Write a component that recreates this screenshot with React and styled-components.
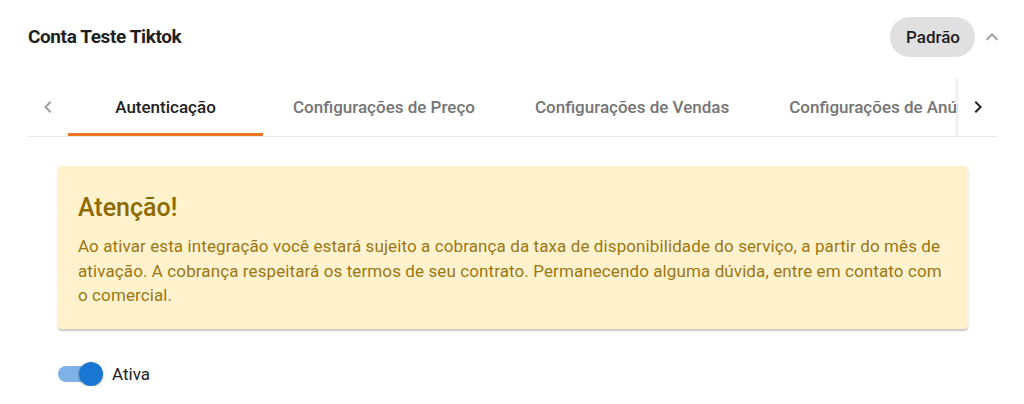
import styled, { createGlobalStyle } from "styled-components";

const GlobalStyle = createGlobalStyle`
    * { box-sizing: border-box; }
    body {
        margin: 0;
        background: #fff;
        font-family: Roboto, "Liberation Sans", sans-serif;
    }
`;

const Container = styled.div`
    padding: 17px 27px 0 28px;
`;

const Header = styled.div`
    display: flex;
    align-items: center;
    justify-content: space-between;
    height: 40px;
`;

const Title = styled.h2`
    margin: 0 0 2px;
    font-size: 19px;
    font-weight: 700;
    color: #1f1f1f;
    letter-spacing: -0.4px;
`;

const Actions = styled.div`
    display: flex;
    align-items: center;
    gap: 5px;
    margin-right: -7px;
`;

const Chip = styled.span`
    display: inline-flex;
    align-items: center;
    height: 40px;
    padding: 0 15px 0 16px;
    border-radius: 20px;
    background: #e0e0e0;
    color: #1f1f1f;
    font-size: 17px;
    font-weight: 500;
`;

const IconButton = styled.button`
    display: flex;
    align-items: center;
    justify-content: center;
    border: none;
    background: none;
    padding: 0;
    width: ${(p) => p.$w || 24}px;
    height: 24px;
    color: ${(p) => (p.$muted ? "#9e9e9e" : "#212121")};
    flex-shrink: 0;
`;

const TabsBar = styled.div`
    display: flex;
    align-items: stretch;
    margin-top: 21px;
    height: 59px;
    border-bottom: 1px solid #e6e6e6;
`;

const Scroller = styled.div`
    flex: 1;
    display: flex;
    overflow: hidden;
    position: relative;
    &::after {
        content: "";
        position: absolute;
        top: 0;
        right: 0;
        width: 4px;
        height: 100%;
        background: linear-gradient(to right, rgba(0,0,0,0), rgba(0,0,0,0.08));
    }
`;

const Tab = styled.div`
    flex-shrink: 0;
    min-width: 195px;
    padding: 0 30px;
    display: flex;
    align-items: center;
    justify-content: center;
    font-size: 17px;
    font-weight: 500;
    white-space: nowrap;
    color: ${(p) => (p.$active ? "#212121" : "#757575")};
    border-bottom: 3px solid ${(p) => (p.$active ? "#ee7623" : "transparent")};
    padding-top: 2px;
`;

const Alert = styled.div`
    margin: 29px 29px 0 30px;
    padding: 27px 20px 21px;
    background: #fff2cc;
    border-radius: 4px;
    box-shadow: 0 2px 2px rgba(0, 0, 0, 0.22);
`;

const AlertTitle = styled.h3`
    margin: 0 0 12px;
    font-size: 25px;
    line-height: 29px;
    font-weight: 500;
    color: #8c6a00;
`;

const AlertText = styled.p`
    margin: 0;
    font-size: 17px;
    line-height: 24.5px;
    letter-spacing: 0.1px;
    color: #9b7716;
`;

const SwitchRow = styled.label`
    display: flex;
    align-items: center;
    gap: 9px;
    margin: 33px 0 0 30px;
    font-size: 17px;
    color: #212121;
`;

const Track = styled.span`
    position: relative;
    width: 45px;
    height: 24px;
    display: inline-block;
    &::before {
        content: "";
        position: absolute;
        left: 0;
        top: 4px;
        width: 40px;
        height: 16px;
        border-radius: 8px;
        background: #7fb2e8;
    }
    &::after {
        content: "";
        position: absolute;
        right: 0;
        top: 0;
        width: 24px;
        height: 24px;
        border-radius: 50%;
        background: #1976d2;
        box-shadow: 0 1px 3px rgba(0, 0, 0, 0.3);
    }
`;

const Chevron = ({ d, size = 24 }) => (
    <svg width={size} height={size} viewBox="0 0 24 24" fill="currentColor">
        <path d={d} />
    </svg>
);

const tabs = [
    "Autenticação",
    "Configurações de Preço",
    "Configurações de Vendas",
    "Configurações de Anúncios",
    "Configurações de Estoque",
];

const App = () => {
    return (
        <Container>
            <GlobalStyle />
            <Header>
                <Title>Conta Teste Tiktok</Title>
                <Actions>
                    <Chip>Padrão</Chip>
                    <IconButton $muted>
                        <Chevron d="M7.41 15.41 12 10.83l4.59 4.58L18 14l-6-6-6 6z" />
                    </IconButton>
                </Actions>
            </Header>
            <TabsBar>
                <IconButton $muted $w={40} style={{ height: "auto" }}>
                    <Chevron d="M15.41 16.59 10.83 12l4.58-4.59L14 6l-6 6 6 6z" />
                </IconButton>
                <Scroller>
                    {tabs.map((t, i) => (
                        <Tab key={t} $active={i === 0}>{t}</Tab>
                    ))}
                </Scroller>
                <IconButton $w={39} style={{ height: "auto" }}>
                    <Chevron d="M8.59 16.59 13.17 12 8.59 7.41 10 6l6 6-6 6z" />
                </IconButton>
            </TabsBar>
            <Alert>
                <AlertTitle>Atenção!</AlertTitle>
                <AlertText>
                    Ao ativar esta integração você estará sujeito a cobrança da taxa de disponibilidade do serviço, a partir do mês de ativação. A cobrança respeitará os termos de seu contrato. Permanecendo alguma dúvida, entre em contato com o comercial.
                </AlertText>
            </Alert>
            <SwitchRow>
                <Track />
                Ativa
            </SwitchRow>
        </Container>
    );
};

export default App;
